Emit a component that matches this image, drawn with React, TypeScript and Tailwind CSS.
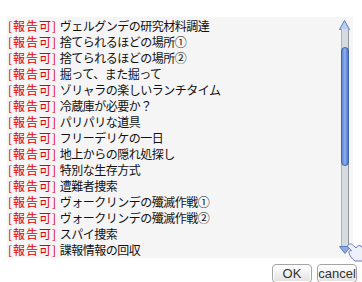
import React from "react";

const items = [
  "ヴェルグンデの研究材料調達",
  "捨てられるほどの場所①",
  "捨てられるほどの場所②",
  "掘って、また掘って",
  "ゾリャラの楽しいランチタイム",
  "冷蔵庫が必要か？",
  "パリパリな道具",
  "フリーデリケの一日",
  "地上からの隠れ処探し",
  "特別な生存方式",
  "遭難者捜索",
  "ヴォークリンデの殲滅作戦①",
  "ヴォークリンデの殲滅作戦②",
  "スパイ捜索",
  "諜報情報の回収",
];

const Scrollbar = () => {
  return (
    <div className="relative w-[11px] h-full">
      {/* up arrow */}
      <svg width="11" height="12" viewBox="0 0 11 12" className="absolute left-0 top-[3px]">
        <path d="M5.5 0.5 L10.5 9.5 L0.5 9.5 Z" fill="#b9cdf0" stroke="#5b7cc4" strokeWidth="1" />
      </svg>
      {/* track */}
      <div className="absolute left-[2px] top-[12px] w-[8px] h-[218px] bg-[#d5dbde] border-l border-[#aab2b8] border-r border-r-[#8d959b]" />
      {/* thumb */}
      <div className="absolute left-[2px] top-[30px] w-[8px] h-[119px] rounded-t-[4px] rounded-b-[4px] bg-gradient-to-r from-[#5d86d6] via-[#8fb0ee] to-[#4d74c4] border border-[#3f62ad]" />
      {/* down arrow */}
      <svg width="12" height="9" viewBox="0 0 12 9" className="absolute left-0 top-[229px]">
        <path d="M0.5 0.5 L11.5 0.5 L6 7.5 Z" fill="#8fa9e0" stroke="#5b7cc4" strokeWidth="1" />
      </svg>
    </div>
  );
};

const Cursor = () => (
  <svg width="16" height="22" viewBox="0 0 16 22" className="absolute left-[347px] top-[240px]">
    <path
      d="M1 5 C3 3 5 4 7 6 L9 8 C10 6 12 5 14 6 L15.5 8 L15.5 21 L8 21 C5 19 3 16 2 13 C1.5 11 3 10 4.5 11 L2 8 C0.5 7 0.5 6 1 5 Z"
      fill="#eef0fb"
      stroke="#6a7ab8"
      strokeWidth="1"
    />
  </svg>
);

const Btn = ({ label }: { label: string }) => (
  <button className="w-[40px] h-[19px] rounded-[4px] border border-[#a4a4a4] bg-gradient-to-b from-white to-[#e2e2e2] text-[13px] leading-[17px] text-[#333] font-['Liberation_Sans',sans-serif] shadow-[inset_0_0_0_1px_#fff]">
    {label}
  </button>
);

export default function App() {
  return (
    <div className="relative w-[362px] h-[282px] bg-white overflow-hidden font-['Noto_Sans_CJK_JP',sans-serif]">
      <div className="pt-[17px] pl-[7px]">
        <div className="w-[346px] h-[241px] bg-[#f5f5f5] flex">
          <ul className="flex-1 pl-[1px] pt-[1px]">
            {items.map((t) => (
              <li
                key={t}
                className="h-[16px] leading-[16px] text-[12px] text-[#111] whitespace-nowrap"
              >
                <span className="text-[#e00000] tracking-[1px]">[報告可]</span>{" "}
                <span className="tracking-[-0.5px]">{t}</span>
              </li>
            ))}
          </ul>
          <div className="pr-[3px] h-full">
            <Scrollbar />
          </div>
        </div>
      </div>
      <div className="flex justify-end gap-[5px] pr-[5px] pt-[6px]">
        <Btn label="OK" />
        <Btn label="cancel" />
      </div>
      <Cursor />
    </div>
  );
}
